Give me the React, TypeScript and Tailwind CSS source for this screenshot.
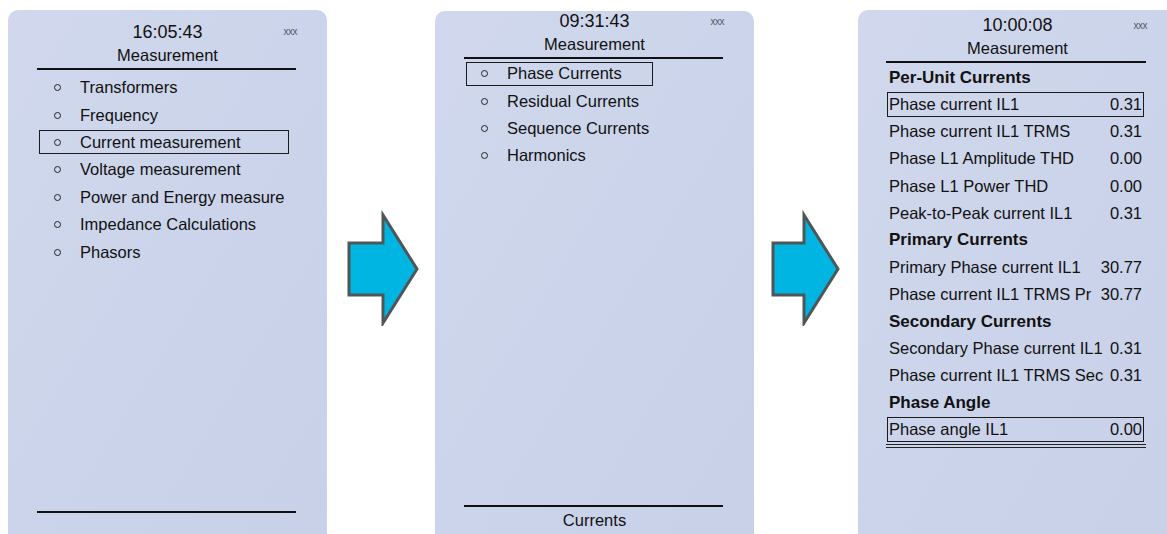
import React from 'react';

type Row = { label: string; value?: string; heading?: boolean; boxed?: boolean };

const menuOne = [
  'Transformers',
  'Frequency',
  'Current measurement',
  'Voltage measurement',
  'Power and Energy measure',
  'Impedance Calculations',
  'Phasors',
];

const menuTwo = ['Phase Currents', 'Residual Currents', 'Sequence Currents', 'Harmonics'];

const values: Row[] = [
  { label: 'Per-Unit Currents', heading: true },
  { label: 'Phase current IL1', value: '0.31', boxed: true },
  { label: 'Phase current IL1 TRMS', value: '0.31' },
  { label: 'Phase L1 Amplitude THD', value: '0.00' },
  { label: 'Phase L1 Power THD', value: '0.00' },
  { label: 'Peak-to-Peak current IL1', value: '0.31' },
  { label: 'Primary Currents', heading: true },
  { label: 'Primary Phase current IL1', value: '30.77' },
  { label: 'Phase current IL1 TRMS Pr', value: '30.77' },
  { label: 'Secondary Currents', heading: true },
  { label: 'Secondary Phase current IL1', value: '0.31' },
  { label: 'Phase current IL1 TRMS Sec', value: '0.31' },
  { label: 'Phase Angle', heading: true },
  { label: 'Phase angle IL1', value: '0.00', boxed: true },
];

function Stars({ top }: { top: string }) {
  // little status marker in the corner of the display
  return (
    <span className={`absolute right-[30px] ${top} text-[10px] leading-none tracking-[-0.5px] text-[#555a66]`}>
      xxx
    </span>
  );
}

function Bullet() {
  return <span className="w-[7px] h-[7px] rounded-full border-[1.5px] border-[#222] shrink-0" />;
}

function MenuRow({ text, boxed, boxWidth }: { text: string; boxed?: boolean; boxWidth: string }) {
  return (
    <div className="h-[27.4px] flex items-center mx-[31px]">
      <div
        className={`h-[24px] flex items-center pl-[14px] ${
          boxed ? `border-[1.5px] border-[#1b1b1b] ${boxWidth}` : 'border-[1.5px] border-transparent w-full'
        }`}
      >
        <Bullet />
        <span className="ml-[19px] whitespace-nowrap">{text}</span>
      </div>
    </div>
  );
}

function Arrow({ head }: { head: number }) {
  return (
    <svg width="72" height="116" viewBox="0 0 72 116" className="shrink-0">
      <polygon
        points={`2,33 ${head},33 ${head},5 ${head + 34},59 ${head},113 ${head},85 2,85`}
        fill="#00b5e2"
        stroke="#4f5657"
        strokeWidth="3"
        strokeLinejoin="miter"
      />
    </svg>
  );
}

const panel =
  'relative shrink-0 w-[319px] rounded-t-[10px] bg-linear-to-br from-[#d1d8ed] via-[#cbd4ea] to-[#c8d1e8] flex flex-col text-[#111]';

export default function App() {
  return (
    <div className="w-[1167px] h-[534px] overflow-hidden bg-white flex items-start font-['Liberation_Sans',Arial,sans-serif] text-[16.5px]">
      {/* first screen */}
      <div className={`${panel} ml-[8px] mt-[10px] h-[524px] w-[318px]`}>
        <Stars top="top-[17px]" />
        <div className="pt-[11px] h-[33px] leading-[22px] text-center text-[18px]">16:05:43</div>
        <div className="h-[24px] leading-[24px] text-center">Measurement</div>
        <div className="mt-[1px] h-[2px] bg-[#111] ml-[29px] mr-[31px]" />
        <div className="pt-[4px]">
          {menuOne.map(m => (
            <MenuRow key={m} text={m} boxed={m === 'Current measurement'} boxWidth="w-[250px]" />
          ))}
        </div>
        <div className="mt-auto mb-[21px] h-[2px] bg-[#111] ml-[29px] mr-[31px]" />
      </div>

      <div className="ml-[20px] mt-[210px]">
        <Arrow head={36} />
      </div>

      {/* second screen */}
      <div className={`${panel} ml-[16px] mt-[11px] h-[523px]`}>
        <Stars top="top-[6px]" />
        <div className="h-[21px] leading-[20px] text-center text-[18px]">09:31:43</div>
        <div className="h-[25px] leading-[25px] text-center">Measurement</div>
        <div className="h-[2px] bg-[#111] ml-[29px] mr-[31px]" />
        <div className="pt-[1px]">
          {menuTwo.map(m => (
            <MenuRow key={m} text={m} boxed={m === 'Phase Currents'} boxWidth="w-[187px]" />
          ))}
        </div>
        <div className="mt-auto h-[2px] bg-[#111] ml-[29px] mr-[31px]" />
        <div className="h-[26px] leading-[26px] text-center mb-[1px]">Currents</div>
      </div>

      <div className="ml-[17px] mt-[210px]">
        <Arrow head={33} />
      </div>

      {/* third screen */}
      <div className={`${panel} ml-[15px] mt-[10px] h-[524px]`}>
        <Stars top="top-[11px]" />
        <div className="pt-[4px] h-[26px] leading-[22px] text-center text-[18px]">10:00:08</div>
        <div className="h-[24px] leading-[24px] text-center">Measurement</div>
        <div className="mt-[1px] h-[2px] bg-[#111] ml-[28px] mr-[31px]" />
        <div className="pt-[1px]">
          {values.map(r => (
            <div key={r.label} className="h-[27.1px] flex items-center ml-[29px] mr-[33px]">
              {r.heading ? (
                <span className="pl-[2px] font-bold text-[17px] whitespace-nowrap">{r.label}</span>
              ) : (
                <div
                  className={`w-full h-[25px] flex items-center pl-[1px] pr-[1px] ${
                    r.boxed ? 'border-[1.5px] border-[#1b1b1b]' : 'border-[1.5px] border-transparent'
                  }`}
                >
                  <span className="flex-1 min-w-0 whitespace-nowrap">{r.label}</span>
                  <span className="shrink-0">{r.value}</span>
                </div>
              )}
            </div>
          ))}
        </div>
        <div className="mt-[1px] h-[4px] border-y border-[#222] ml-[28px] mr-[31px]" />
      </div>
    </div>
  );
}
